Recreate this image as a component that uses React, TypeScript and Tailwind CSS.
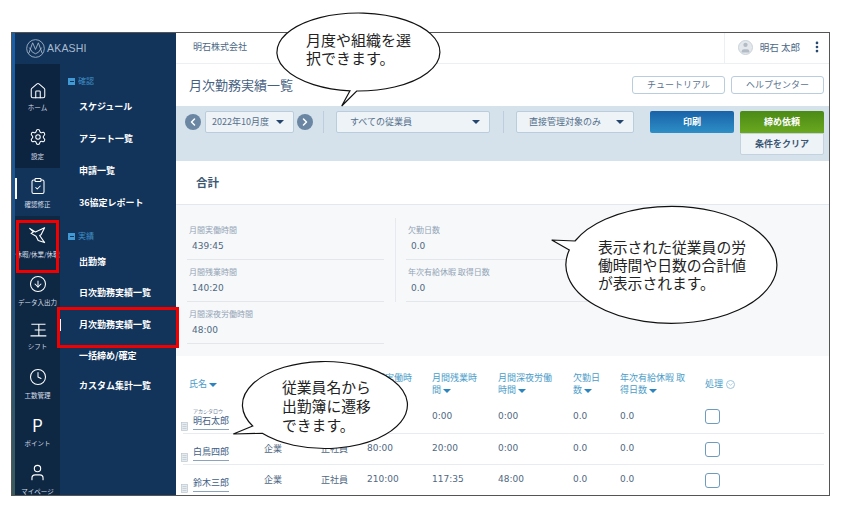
import { Home, Settings, ClipboardCheck, CircleArrowDown, Clock, User, ChevronLeft, ChevronRight, ChevronDown, EllipsisVertical } from "lucide-react";

const FONT = "font-['Noto_Sans_CJK_JP','Noto_Sans',sans-serif]";
const NUM = "font-['DejaVu_Sans','Noto_Sans_CJK_JP',sans-serif]";

function Bird() {
  return (
    <svg viewBox="0 0 24 24" className="h-[17px] w-[17px]" fill="none" stroke="currentColor" strokeWidth="1.6" strokeLinejoin="round">
      <path d="M1 2 L9 7 L22 1 L17 11 L15 12 L22 22 L13 19 L10 13 L3 9 L6 7 Z" />
    </svg>
  );
}

function Shift() {
  return (
    <svg viewBox="0 0 24 24" className="h-[20px] w-[20px]" fill="none" stroke="currentColor" strokeWidth="1.3">
      <path d="M4 5H21M8 12H21M3 19H22M13 5V19" />
    </svg>
  );
}

const railItems = [
  { label: "ホーム", icon: <Home size={18} strokeWidth={1.4} />, box: "h-[52px] pt-[17px]", gap: "mt-[2px]" },
  { label: "設定", icon: <Settings size={18} strokeWidth={1.4} />, box: "h-[52px] pt-[11px]", gap: "mt-[5px]" },
  { label: "確認修正", icon: <ClipboardCheck size={18} strokeWidth={1.4} />, box: "h-[48px] pt-[8px]", gap: "mt-[4px]" },
  { label: "休暇/休業/休職", icon: <Bird />, box: "h-[50px] pt-[9px]", gap: "mt-[5px]" },
  { label: "データ入出力", icon: <CircleArrowDown size={18} strokeWidth={1.4} />, box: "h-[46px] pt-[8px]", gap: "mt-[4px]" },
  { label: "シフト", icon: <Shift />, box: "h-[46px] pt-[8px]", gap: "mt-[2px]" },
  { label: "工数管理", icon: <Clock size={18} strokeWidth={1.4} />, box: "h-[48px] pt-[9px]", gap: "mt-[4px]" },
  { label: "ポイント", icon: <span className="text-[17px] leading-[18px]">P</span>, box: "h-[48px] pt-[9px]", gap: "mt-[4px]" },
  { label: "マイページ", icon: <User size={19} strokeWidth={1.4} />, box: "h-[41px] pt-[9px]", gap: "mt-[5px]" },
];

function Caret({ className = "" }: { className?: string }) {
  return <span className={`inline-block h-0 w-0 border-x-[4px] border-t-[4px] border-x-transparent border-t-current ${className}`} />;
}

function MenuHead({ label, className = "" }: { label: string; className?: string }) {
  return (
    <div className={`flex h-[20px] items-center gap-[3px] pl-[8px] text-[8px] text-[#3f8fc4] ${className}`}>
      <span className="flex h-[7px] w-[7px] items-center justify-center bg-[#3f9ad6]">
        <span className="h-[1px] w-[4px] bg-[#12335a]" />
      </span>
      {label}
    </div>
  );
}

function MenuItem({ label, h = "h-[32px]", active }: { label: string; h?: string; active?: boolean }) {
  return (
    <div className={`flex items-center pl-[19px] text-[9px] font-bold text-white ${h}`}>
      {active && <span className="-ml-[19px] mr-[18px] h-[12px] w-[1px] bg-white" />}
      {label}
    </div>
  );
}

function Select({ label, width, pl }: { label: string; width: string; pl: string }) {
  return (
    <div className={`flex h-[22px] items-center justify-between rounded-[2px] border border-[#b9cddd] bg-[#eef3f7] pr-[9px] text-[9px] text-[#55708c] ${width} ${pl}`}>
      <span>{label}</span>
      <Caret className="text-[#24466e]" />
    </div>
  );
}

function Stat({ label, value, width = "w-[197px]" }: { label: string; value: string; width?: string }) {
  return (
    <div className={`h-[42px] border-b border-[#e3e7eb] pt-[6px] ${width}`}>
      <div className="pl-[2px] text-[8px] leading-[12px] text-[#93a3b5]">{label}</div>
      <div className={`mt-[4px] pl-[5px] text-[9px] leading-[12px] text-[#4f6882] ${NUM}`}>{value}</div>
    </div>
  );
}

const COLS = "grid grid-cols-[81px_57px_46px_65px_66px_75px_47px_85px_1fr]";

// first row's org/type/work cells sit under the callout, so they stay empty
const rows = [
  { name: "明石太郎", kana: "アカシタロウ", org: "", type: "", work: "", over: "0:00", night: "0:00", h: "h-[36px] pt-[2px]" },
  { name: "白鳥四郎", org: "企業", type: "正社員", work: "80:00", over: "20:00", night: "0:00", h: "h-[31px]" },
  { name: "鈴木三郎", org: "企業", type: "正社員", work: "210:00", over: "117:35", night: "48:00", h: "h-[30px]" },
];

function Doc() {
  return (
    <svg viewBox="0 0 7 9" className="absolute bottom-[2px] left-[-2px] h-[9px] w-[7px]" fill="#e6ebef" stroke="#b4c0cb" strokeWidth="0.6">
      <rect x="0.4" y="0.4" width="6.2" height="8.2" />
      <path d="M1.5 2.5H5.5M1.5 4.5H5.5M1.5 6.5H5.5" />
    </svg>
  );
}

export default function App() {
  return (
    <div className={`relative h-[505px] w-[842px] overflow-hidden bg-white pl-[11px] pt-[32px] ${FONT}`}>
      <div className="flex h-[464px] w-[819px] overflow-hidden border border-[#555]">
        {/* sidebar */}
        <div className="flex w-[164px] shrink-0">
          <div className="w-[3px] bg-gradient-to-b from-[#1b5fa5] via-[#1f4f80] to-[#3c5a5c]" />
          <div className="flex flex-1 flex-col bg-[#12335a]">
            <div className="flex h-[31px] shrink-0 items-center gap-[2px] pl-[11px] text-[#a9bccf]">
              <svg viewBox="0 0 20 20" className="h-[19px] w-[19px]" fill="none" stroke="currentColor" strokeWidth="0.9">
                <circle cx="10" cy="10" r="9.3" />
                <path d="M3 15 L7 4 L10 11 L13 4 L17 15 M3.5 9 Q10 22 16.5 9" />
              </svg>
              <span className="text-[10.5px] tracking-[0.2px] font-['Liberation_Sans',sans-serif]">AKASHI</span>
            </div>
            <div className="flex min-h-0 flex-1">
              <div className="w-[45px] shrink-0 bg-[#0e2743]">
                {railItems.map((it, i) => (
                  <div
                    key={it.label}
                    className={`relative flex flex-col items-center text-white ${it.box} ${i < 2 ? "bg-[#0c2440]" : i === 2 ? "bg-[#12335a]" : ""}`}
                  >
                    {i === 2 && <span className="absolute left-0 top-[10px] h-[21px] w-[2px] bg-white" />}
                    <span className="flex h-[20px] items-center">{it.icon}</span>
                    <span className={`whitespace-nowrap text-[6.5px] leading-[8px] text-[#d5dde6] ${it.gap}`}>{it.label}</span>
                  </div>
                ))}
              </div>
              <div className="flex-1 pt-[7px]">
                <MenuHead label="確認" />
                <MenuItem label="スケジュール" />
                <MenuItem label="アラート一覧" />
                <MenuItem label="申請一覧" />
                <MenuItem label="36協定レポート" />
                <MenuHead label="実績" className="mt-[7px]" />
                <MenuItem label="出勤簿" h="h-[31px]" />
                <MenuItem label="日次勤務実績一覧" />
                <MenuItem label="月次勤務実績一覧" active />
                <MenuItem label="一括締め/確定" h="h-[30px]" />
                <MenuItem label="カスタム集計一覧" h="h-[30px]" />
              </div>
            </div>
          </div>
        </div>

        {/* main */}
        <div className="flex min-w-0 flex-1 flex-col bg-white">
          <div className="flex h-[31px] shrink-0 items-center justify-between border-b border-[#edf0f3] pb-[2px] pl-[17px] text-[9px] text-[#4b6785]">
            <span>明石株式会社</span>
            <div className="flex h-[31px] items-center border-l border-[#edf0f3] pl-[13px] pr-[5px]">
              <span className="flex h-[15px] w-[15px] items-center justify-center overflow-hidden rounded-full border border-[#c9d3dc] bg-[#e4e8ec] text-[#b3bcc5]">
                <User size={13} fill="currentColor" strokeWidth={0} />
              </span>
              <span className="ml-[7px] text-[9.5px] text-[#4b6785]">明石 太郎</span>
              <EllipsisVertical size={14} strokeWidth={2.6} className="ml-[10px] text-[#24466e]" />
            </div>
          </div>

          <div className="flex h-[42px] shrink-0 items-center justify-between pb-[1px] pl-[13px] pr-[5px]">
            <h1 className="text-[13px] font-normal text-[#46617f]">月次勤務実績一覧</h1>
            <div className="flex gap-[6px]">
              <button className="h-[18px] w-[93px] rounded-[3px] border border-[#b9cddd] text-[9px] text-[#5a7390]">チュートリアル</button>
              <button className="h-[18px] w-[93px] rounded-[3px] border border-[#b9cddd] text-[9px] text-[#5a7390]">ヘルプセンター</button>
            </div>
          </div>

          <div className="flex h-[55px] shrink-0 items-start bg-[#d5e2ec] pl-[9px] pt-[5px]">
            <span className="mt-[3px] flex h-[16px] w-[16px] items-center justify-center rounded-full bg-[#6b86a3] text-white">
              <ChevronLeft size={12} strokeWidth={3} />
            </span>
            <Select label="2022年10月度" width="w-[89px] ml-[4px]" pl="pl-[6px]" />
            <span className="ml-[3px] mt-[3px] flex h-[16px] w-[16px] items-center justify-center rounded-full bg-[#6b86a3] text-white">
              <ChevronRight size={12} strokeWidth={3} />
            </span>
            <span className="ml-[10px] h-[22px] w-[1px] bg-[#bccedb]" />
            <Select label="すべての従業員" width="w-[154px] ml-[12px]" pl="pl-[13px]" />
            <span className="ml-[13px] h-[22px] w-[1px] bg-[#bccedb]" />
            <Select label="直接管理対象のみ" width="w-[118px] ml-[12px]" pl="pl-[12px]" />
            <button className="ml-[16px] h-[22px] w-[84px] rounded-[2px] bg-gradient-to-b from-[#1a62a8] to-[#2e8fc6] text-[9px] font-bold text-white">印刷</button>
            <div className="ml-[6px] flex w-[84px] flex-col">
              <button className="h-[22px] rounded-t-[2px] bg-gradient-to-b from-[#4b8a17] to-[#6aa81f] text-[9px] font-bold text-white">締め依頼</button>
              <button className="h-[22px] rounded-b-[2px] border border-[#c3d2de] bg-[#eef3f7] text-[9px] font-bold text-[#3a5673]">条件をクリア</button>
            </div>
          </div>

          <div className="flex h-[44px] shrink-0 items-center border-b border-[#e1e8ef] pl-[20px] text-[11.5px] font-bold text-[#3d5873]">合計</div>

          <div className="flex h-[151px] shrink-0 bg-[#f6f8fa] pl-[11px] pt-[13px]">
            <div>
              <Stat label="月間実働時間" value="439:45" />
              <Stat label="月間残業時間" value="140:20" />
              <Stat label="月間深夜労働時間" value="48:00" />
            </div>
            <div className="ml-[11px] h-[84px] w-[1px] bg-[#e6eaee]" />
            <div className="ml-[10px]">
              <Stat label="欠勤日数" value="0.0" />
              <Stat label="年次有給休暇 取得日数" value="0.0" />
            </div>
          </div>

          <div className="flex-1 pl-[7px] pr-[5px] text-[9px] text-[#4f6882]">
            <div className={`${COLS} h-[42px] items-center pb-[2px] pt-[16px] leading-[12px] text-[#4a9cc9]`}>
              <div className="pl-[6px]">氏名 <Caret className="text-[#2a84c0]" /></div>
              <div />
              <div />
              <div className="w-[50px] break-all">月間実働時間 <Caret className="text-[#2a84c0]" /></div>
              <div className="w-[50px] break-all">月間残業時間 <Caret className="text-[#2a84c0]" /></div>
              <div className="w-[60px] break-all">月間深夜労働時間 <Caret className="text-[#2a84c0]" /></div>
              <div className="w-[30px] break-all">欠勤日数 <Caret className="text-[#2a84c0]" /></div>
              <div className="w-[70px] break-all">年次有給休暇 取得日数 <Caret className="text-[#2a84c0]" /></div>
              <div className="flex items-center gap-[3px] justify-self-start">
                処理
                <ChevronDown size={9} strokeWidth={2} className="rounded-full border border-[#9fc4dc] text-[#7fb0cf]" />
              </div>
            </div>
            {rows.map((r, i) => (
              <div key={r.name} className={`${COLS} items-center ${r.h} ${i < 2 ? "border-b border-[#e8ecf0]" : ""}`}>
                <div className="relative flex h-full flex-col justify-end pb-[3px] pl-[10px]">
                  <Doc />
                  {r.kana && <div className="text-[5px] leading-[6px] text-[#6c8299]">{r.kana}</div>}
                  <div className="w-[36px] whitespace-nowrap border-b border-[#8ba3bb] pb-[1px] leading-[14px] text-[#3f5f86]">{r.name}</div>
                </div>
                <div>{r.org}</div>
                <div>{r.type}</div>
                <div className={NUM}>{r.work}</div>
                <div className={NUM}>{r.over}</div>
                <div className={NUM}>{r.night}</div>
                <div className={NUM}>0.0</div>
                <div className={NUM}>0.0</div>
                <div className="h-[15px] w-[15px] rounded-[3px] border-[1.5px] border-[#6f9bbd] bg-white" />
              </div>
            ))}
          </div>
        </div>
      </div>

      {/* red highlight boxes */}
      <div className="absolute left-[16px] top-[220px] h-[53px] w-[43px] border-[3px] border-[#f00000]" />
      <div className="absolute left-[57px] top-[307px] h-[41px] w-[122px] border-[3px] border-[#f00000]" />

      {/* callouts */}
      <svg viewBox="0 0 842 505" className="pointer-events-none absolute left-0 top-0 h-[505px] w-[842px]" fill="#fff" stroke="#111" strokeWidth="1.2">
        <path d="M350 90.8 L341.7 106 L356.7 91 A81.5 39 0 1 0 350 90.8 Z" />
        <path d="M569.3 250 L551.7 240 L575 241 A105.5 58.5 0 1 1 569.3 250 Z" />
        <path d="M252.7 426 L233.3 434 L262.3 433.3 A82.5 43.5 0 1 0 252.7 426 Z" />
      </svg>
      <div className="absolute left-[306px] top-[31px] w-[110px] text-[15px] leading-[18px] text-[#222]">月度や組織を選択できます。</div>
      <div className="absolute left-[598px] top-[238px] w-[152px] text-[14.8px] leading-[18px] text-[#222]">表示された従業員の労働時間や日数の合計値が表示されます。</div>
      <div className="absolute left-[282px] top-[377px] w-[92px] text-[14.8px] leading-[19px] text-[#222]">従業員名から出勤簿に遷移できます。</div>
    </div>
  );
}
